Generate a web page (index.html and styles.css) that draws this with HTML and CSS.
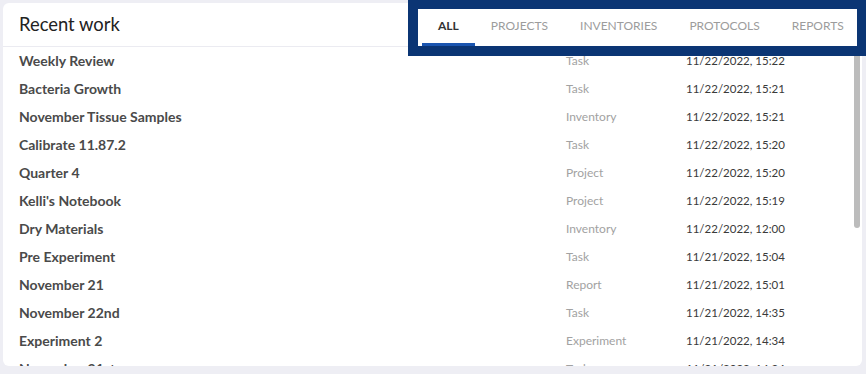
FILE: index.html
```html
<!DOCTYPE html>
<html>
<head>
<meta charset="utf-8">
<link rel="stylesheet" href="styles.css">
</head>
<body>
<div class="card">
  <div class="card-header">
    <h2 class="title">Recent work</h2>
  </div>
  <div class="card-body">
    <div class="list">
      <div class="row"><span class="name">Weekly Review</span><span class="type">Task</span><span class="date">11/22/2022, 15:22</span></div>
      <div class="row"><span class="name">Bacteria Growth</span><span class="type">Task</span><span class="date">11/22/2022, 15:21</span></div>
      <div class="row"><span class="name">November Tissue Samples</span><span class="type">Inventory</span><span class="date">11/22/2022, 15:21</span></div>
      <div class="row"><span class="name">Calibrate 11.87.2</span><span class="type">Task</span><span class="date">11/22/2022, 15:20</span></div>
      <div class="row"><span class="name">Quarter 4</span><span class="type">Project</span><span class="date">11/22/2022, 15:20</span></div>
      <div class="row"><span class="name">Kelli's Notebook</span><span class="type">Project</span><span class="date">11/22/2022, 15:19</span></div>
      <div class="row"><span class="name">Dry Materials</span><span class="type">Inventory</span><span class="date">11/22/2022, 12:00</span></div>
      <div class="row"><span class="name">Pre Experiment</span><span class="type">Task</span><span class="date">11/21/2022, 15:04</span></div>
      <div class="row"><span class="name">November 21</span><span class="type">Report</span><span class="date">11/21/2022, 15:01</span></div>
      <div class="row"><span class="name">November 22nd</span><span class="type">Task</span><span class="date">11/21/2022, 14:35</span></div>
      <div class="row"><span class="name">Experiment 2</span><span class="type">Experiment</span><span class="date">11/21/2022, 14:34</span></div>
      <div class="row"><span class="name">November 21st</span><span class="type">Task</span><span class="date">11/21/2022, 14:24</span></div>
    </div>
    <div class="scroll-thumb"></div>
  </div>
</div>
<nav class="tabs">
  <div class="tab-inner">
    <span class="tab active">All</span>
    <span class="tab">Projects</span>
    <span class="tab">Inventories</span>
    <span class="tab">Protocols</span>
    <span class="tab">Reports</span>
  </div>
</nav>
</body>
</html>
```
FILE: styles.css
```css
* { box-sizing: border-box; }
html, body { margin: 0; padding: 0; }
body {
  width: 866px;
  height: 374px;
  background: #eeeef4;
  font-family: Lato, "Noto Sans", sans-serif;
  overflow: hidden;
  position: relative;
}
.card {
  margin: 3px;
  width: 859px;
  height: 363px;
  background: #ffffff;
  border-radius: 6px;
  display: flex;
  flex-direction: column;
  overflow: hidden;
}
.card-header {
  height: 44px;
  flex: none;
  border-bottom: 1px solid #ebebf1;
  display: flex;
  align-items: center;
  padding: 0 16px 1px;
}
.title {
  margin: 0;
  font-size: 18.4px;
  font-weight: 400;
  color: #222222;
}
.card-body {
  flex: 1;
  position: relative;
  overflow: hidden;
}
.list {
  height: 100%;
  overflow: hidden;
}
.scroll-thumb {
  position: absolute;
  top: 0;
  right: 2px;
  width: 6px;
  height: 181px;
  background: #bcbcbc;
  border-radius: 3px;
}
.row {
  height: 28px;
  display: grid;
  grid-template-columns: 547px 120px auto;
  align-items: center;
  padding: 0 0 2px 16px;
}
.name {
  font-size: 14px;
  font-weight: 700;
  color: #4a4a4a;
}
.type {
  font-size: 12px;
  color: #a2a2a2;
}
.date {
  font-size: 11.5px;
  color: #3a3a3a;
}
.tabs {
  position: absolute;
  top: 0;
  left: 408px;
  width: 458px;
  height: 56px;
  background: #0b3574;
  padding: 9px 9px 10px 10px;
}
.tab-inner {
  background: #ffffff;
  height: 37px;
  display: flex;
  padding-left: 4px;
}
.tab {
  padding: 0 16px 2px;
  display: flex;
  align-items: center;
  font-size: 12px;
  text-transform: uppercase;
  color: #9c9c9c;
  border-bottom: 3px solid transparent;
}
.tab.active {
  color: #333333;
  font-weight: 700;
  border-bottom-color: #1a55b0;
}
```
